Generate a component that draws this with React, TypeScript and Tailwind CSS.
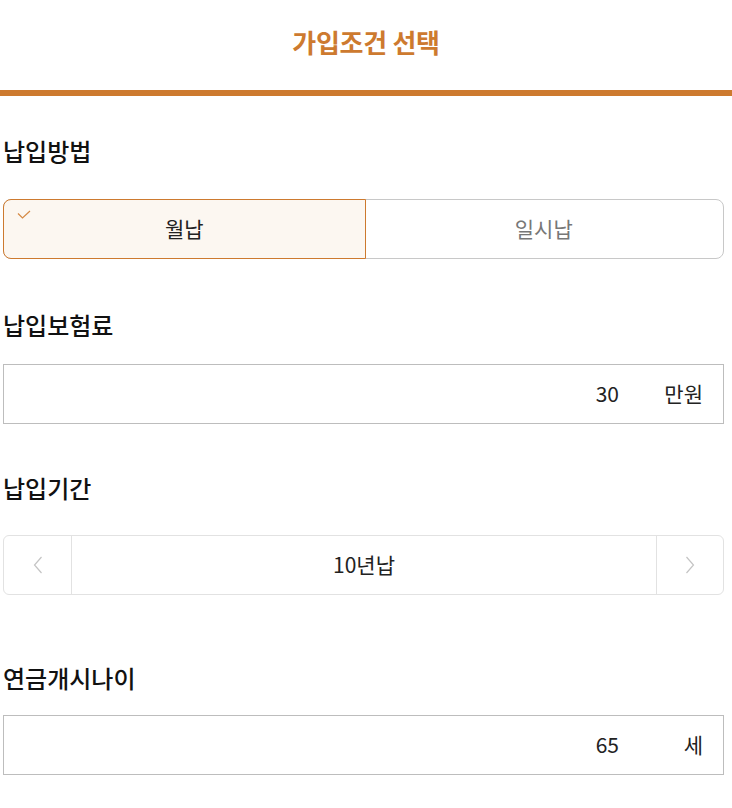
import { useState } from "react";

const font = "font-['Noto_Sans_CJK_KR','Noto_Sans',sans-serif]";

function Label({ children }: { children: React.ReactNode }) {
	return <h2 className="text-[24px] font-medium leading-none text-[#111]">{children}</h2>;
}

function AmountField({ value, unit }: { value: string; unit: string }) {
	return (
		<div className="flex h-[60px] items-center border border-[#bdbdbd] bg-white pr-5 text-[21px] text-[#222]">
			<span className="flex-1 text-right">{value}</span>
			<span className="w-[84px] text-right">{unit}</span>
		</div>
	);
}

export default function App() {
	const [method, setMethod] = useState("월납");
	const periods = ["5년납", "10년납", "15년납", "20년납"];
	const [idx, setIdx] = useState(1);

	return (
		<main className={`${font} min-h-screen bg-white`}>
			<header className="flex h-[96px] items-start justify-center border-b-[6px] border-[#cd7a2f] pt-[22px]">
				<h1 className="text-[26px] font-bold tracking-[-0.3px] text-[#cd7a2f]">가입조건 선택</h1>
			</header>

			<div className="pl-[3px] pr-[8px]">
				<section className="pt-[43px]">
					<Label>납입방법</Label>
					<div className="mt-[36px] flex h-[60px] rounded-lg border border-[#c8c8c8] bg-white">
						{["월납", "일시납"].map((m) => {
							const on = method === m;
							return (
								<button
									key={m}
									onClick={() => setMethod(m)}
									className={`relative -m-px flex flex-1 items-center justify-center text-[21px] ${
										on
											? "rounded-l-lg border border-[#cd7a2f] bg-[#fcf7f1] text-[#222]"
											: "text-[#777]"
									}`}
								>
									{on && (
										<svg className="absolute left-[13px] top-[10px]" width="14" height="10" viewBox="0 0 14 10" fill="none">
											<path d="M1 3.5 L5.5 8 L13 1" stroke="#d58a45" strokeWidth="1.2" />
										</svg>
									)}
									{m}
								</button>
							);
						})}
					</div>
				</section>

				<section className="pt-[54px]">
					<Label>납입보험료</Label>
					<div className="mt-[27px]">
						<AmountField value="30" unit="만원" />
					</div>
				</section>

				<section className="pt-[52px]">
					<Label>납입기간</Label>
					<div className="mt-[35px] flex h-[60px] rounded-md border border-[#e2e2e2] bg-white">
						<button
							onClick={() => setIdx(Math.max(0, idx - 1))}
							className="flex w-[68px] items-center justify-center border-r border-[#e2e2e2]"
						>
							<svg width="10" height="18" viewBox="0 0 10 18" fill="none">
								<path d="M8.5 1 L1.5 9 L8.5 17" stroke="#c4c4c4" strokeWidth="1.2" />
							</svg>
						</button>
						<div className="flex flex-1 items-center justify-center text-[21px] text-[#222]">
							{periods[idx]}
						</div>
						<button
							onClick={() => setIdx(Math.min(periods.length - 1, idx + 1))}
							className="flex w-[67px] items-center justify-center border-l border-[#e2e2e2]"
						>
							<svg width="10" height="18" viewBox="0 0 10 18" fill="none">
								<path d="M1.5 1 L8.5 9 L1.5 17" stroke="#c4c4c4" strokeWidth="1.2" />
							</svg>
						</button>
					</div>
				</section>

				<section className="pt-[71px] pb-10">
					<Label>연금개시나이</Label>
					<div className="mt-[25px]">
						<AmountField value="65" unit="세" />
					</div>
				</section>
			</div>
		</main>
	);
}
